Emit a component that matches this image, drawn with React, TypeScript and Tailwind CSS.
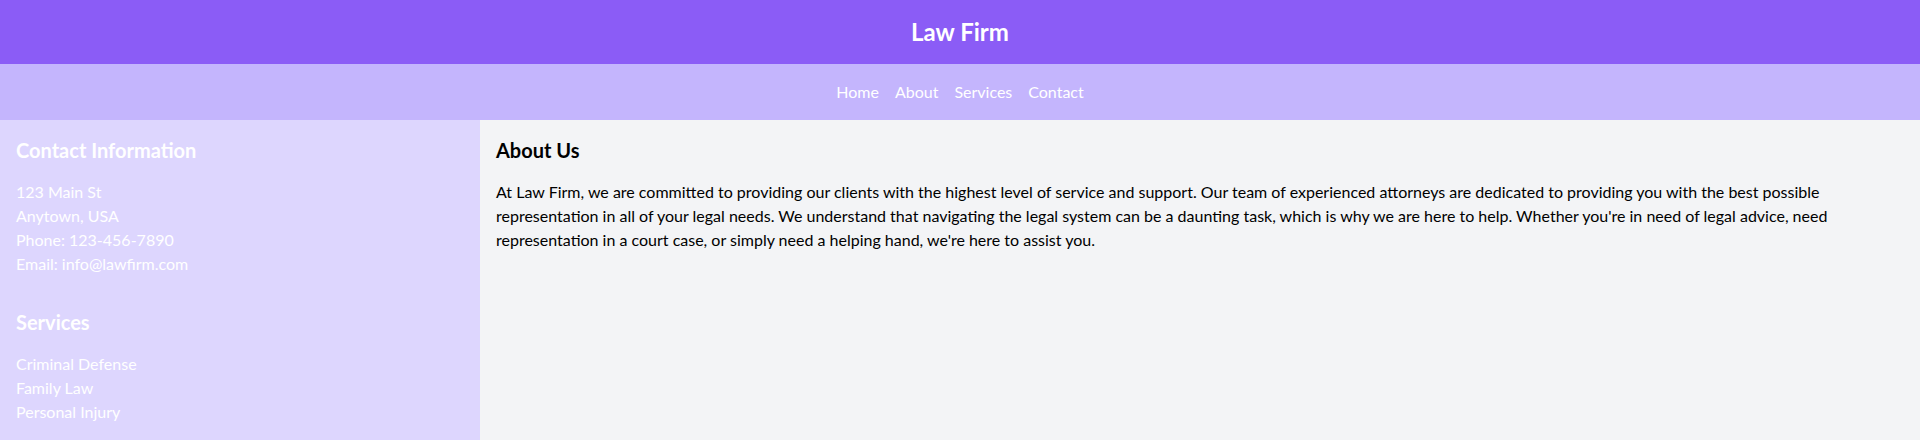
export default function App() {
  return (
    <div className="min-h-screen flex flex-col font-['Lato','Noto_Sans',sans-serif]">
      <header className="h-16 bg-[#8b5cf6] flex items-center justify-center">
        <h1 className="text-2xl font-bold text-white">Law Firm</h1>
      </header>

      <nav className="h-14 bg-[#c4b5fd] flex items-center justify-center">
        <ul className="flex gap-4 text-white">
          <li><a href="#">Home</a></li>
          <li><a href="#">About</a></li>
          <li><a href="#">Services</a></li>
          <li><a href="#">Contact</a></li>
        </ul>
      </nav>

      <div className="flex flex-1 h-[320px]">
        <aside className="w-1/4 bg-[#ddd6fe] p-4 text-white">
          <h2 className="text-xl font-bold mb-4">Contact Information</h2>
          <p>123 Main St</p>
          <p>Anytown, USA</p>
          <p>Phone: 123-456-7890</p>
          <p className="mb-8">Email: info@lawfirm.com</p>
          <h2 className="text-xl font-bold mb-4">Services</h2>
          <ul>
            <li>Criminal Defense</li>
            <li>Family Law</li>
            <li>Personal Injury</li>
          </ul>
        </aside>

        <main className="flex-1 bg-[#f3f4f6] p-4 text-black">
          <h2 className="text-xl font-bold mb-4">About Us</h2>
          <p>
            At Law Firm, we are committed to providing our clients with the highest level of service and support. Our team of experienced attorneys are dedicated to providing you with the best possible representation in all of your legal needs. We understand that navigating the legal system can be a daunting task, which is why we are here to help. Whether you're in need of legal advice, need representation in a court case, or simply need a helping hand, we're here to assist you.
          </p>
        </main>
      </div>
    </div>
  );
}
